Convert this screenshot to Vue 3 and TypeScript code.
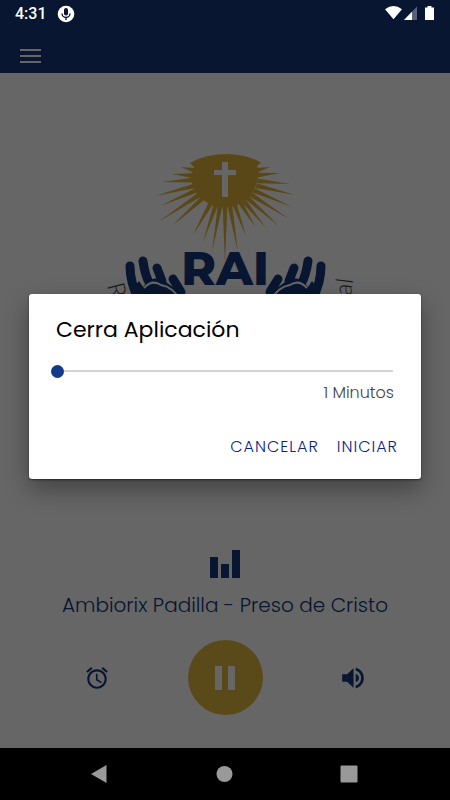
<script setup lang="ts">
import { ref } from 'vue'

const minutes = ref(1)
const open = ref(true)
const track = 'Ambiorix Padilla - Preso de Cristo'

// Tips of the sun rays in the logo; each ray starts on the edge of the disc
const tips: [number, number][] = [
  [181, 167], [172, 174], [162, 182], [155, 196], [160, 206], [158, 222],
  [172, 226], [193, 235], [203, 242], [212, 252], [225, 264], [238, 252],
  [246, 236], [256, 228], [266, 228], [279, 226], [289, 219], [292, 207],
  [295, 195], [290, 184], [280, 173], [270, 167],
]

function rayPoints([x, y]: [number, number]): string {
  const dx = x - 225
  const dy = y - 178
  const reach = 0.93 / Math.hypot(dx / 35, dy / 28)
  const bx = 225 + dx * reach
  const by = 178 + dy * reach
  const length = Math.hypot(dx, dy)
  const nx = (-dy / length) * 2.4
  const ny = (dx / length) * 2.4
  return `${bx + nx},${by + ny} ${x},${y} ${bx - nx},${by - ny}`
}
</script>

<template>
  <main class="phone">
    <header class="top">
      <div class="status">
        <div class="status-side">
          <time>4:31</time>
          <svg class="mic" viewBox="0 0 18 18" aria-hidden="true">
            <circle cx="9" cy="9" r="8.3" fill="#fff" />
            <rect x="7" y="3" width="4" height="7.5" rx="2" fill="#081630" />
            <path d="M5 8.5a4 4 0 0 0 8 0M9 12.5v2.5" fill="none" stroke="#081630" stroke-width="1.4" />
          </svg>
        </div>
        <svg class="signals" viewBox="0 0 50 16" aria-hidden="true">
          <path d="M0 3.300Q8.500 -3.300 17 3.300L8.500 13.300Z" fill="#fff" />
          <path d="M32 .5V14H19Z" fill="#56617a" />
          <path d="M27 5.700V14H19Z" fill="#fff" />
          <path d="M42.500 0h4v1.500H49V14h-9V1.500h2.500Z" fill="#fff" />
        </svg>
      </div>
      <button class="menu" type="button" aria-label="Menu">
        <span></span><span></span><span></span>
      </button>
    </header>

    <section class="content">
      <svg class="logo" viewBox="95 73 260 250" role="img" aria-label="RAI">
        <g fill="#e0b23c">
          <path d="M190 163Q205 154 228 154Q250 155 261 163L257 166Q260 172 257 182Q254 193 247 199Q237 207 225 207Q211 207 202 199Q194 192 192 183Q191 174 194 167Z" />
          <polygon v-for="(tip, i) in tips" :key="i" :points="rayPoints(tip)" />
        </g>
        <path d="M222 162h6v8h8v5h-8v22h-6v-22h-8v-5h8Z" fill="#fff" />
        <text class="brand" x="225" y="285" text-anchor="middle">RAI</text>
        <g class="hands">
          <path class="fingers" d="M130 266Q130 283 139 300M143 261Q145 276 150 284M157 268L162 281M173 279L181 292" />
          <path class="palm" d="M132 290L140 302H184L177 290Q173 287 170 285L162 279Q151 276 143 287L139 281Z" />
          <path class="crease" d="M144 288Q152 279 161 285Q173 287 180 300" />
        </g>
        <g class="hands" transform="matrix(-1 0 0 1 451 0)">
          <path class="fingers" d="M130 266Q130 283 139 300M143 261Q145 276 150 284M157 268L162 281M173 279L181 292" />
          <path class="palm" d="M132 290L140 302H184L177 290Q173 287 170 285L162 279Q151 276 143 287L139 281Z" />
          <path class="crease" d="M144 288Q152 279 161 285Q173 287 180 300" />
        </g>
        <text class="ring" transform="translate(107 285) rotate(76)">R</text>
        <text class="ring" transform="translate(351 296) rotate(-83)">al</text>
      </svg>

      <div class="player">
        <svg class="bars" viewBox="0 0 30 28" aria-hidden="true">
          <path d="M0 7h8v21H0ZM11 14h8v14h-8ZM22 0h8v28h-8Z" fill="#14377b" />
        </svg>
        <h1>{{ track }}</h1>
        <div class="controls">
          <button class="icon" type="button" aria-label="Temporizador" @click="open = true">
            <svg viewBox="0 0 24 24"><path d="M22 5.720l-4.600-3.860-1.290 1.530 4.600 3.860L22 5.720zM7.880 3.390L6.600 1.860 2 5.710l1.290 1.530 4.590-3.850zM12.500 8H11v6l4.750 2.850.75-1.230-4-2.370V8zM12 4c-4.970 0-9 4.030-9 9s4.020 9 9 9c4.970 0 9-4.030 9-9s-4.030-9-9-9zm0 16c-3.870 0-7-3.130-7-7s3.130-7 7-7 7 3.130 7 7-3.130 7-7 7z" /></svg>
          </button>
          <button class="pause" type="button" aria-label="Pausa">
            <svg viewBox="0 0 24 24"><path d="M2 0h7v24H2ZM15 0h7v24h-7Z" /></svg>
          </button>
          <button class="icon" type="button" aria-label="Volumen">
            <svg viewBox="0 0 24 24"><path d="M2 8.500v7h4.500l6 5.500V3L6.500 8.500H2zM17.500 12c0-1.770-1.020-3.290-3-4.030v8.050c1.980-.73 3-2.250 3-4.020zM14.500 2.500v2.600c2.890.86 5 3.540 5 6.900s-2.110 6.040-5 6.900v2.600c4.210-.91 7.500-4.690 7.500-9.500s-3.290-8.590-7.500-9.500z" /></svg>
          </button>
        </div>
      </div>
    </section>

    <nav class="system">
      <button type="button" aria-label="Atrás"><svg viewBox="0 0 18 18"><path d="M1 9L16.500 0v18Z" /></svg></button>
      <button type="button" aria-label="Inicio"><svg viewBox="0 0 18 18"><circle cx="9.500" cy="9" r="8" /></svg></button>
      <button type="button" aria-label="Recientes"><svg viewBox="0 0 18 18"><rect x=".5" y=".5" width="17" height="17" rx="1" /></svg></button>
    </nav>

    <div v-if="open" class="scrim">
      <div class="dialog" role="dialog" aria-modal="true" aria-labelledby="dialog-title">
        <h2 id="dialog-title">Cerra Aplicación</h2>
        <input id="minutes" v-model.number="minutes" type="range" min="1" max="120" />
        <label for="minutes">{{ minutes }} Minutos</label>
        <div class="actions">
          <button type="button" @click="open = false">CANCELAR</button>
          <button type="button" @click="open = false">INICIAR</button>
        </div>
      </div>
    </div>
  </main>
</template>

<style>
body {
  background: #000;
}
</style>

<style scoped>
* {
  box-sizing: border-box;
}
.phone {
  position: relative;
  display: flex;
  flex-direction: column;
  min-height: 100vh;
  font-family: Poppins, Inter, sans-serif;
  background: #fff;
}
button {
  padding: 0;
  border: 0;
  background: none;
  font: inherit;
  cursor: pointer;
}
svg {
  display: block;
}
.top {
  background: #14377b;
}
.status {
  position: relative;
  z-index: 2;
  display: flex;
  align-items: center;
  justify-content: space-between;
  height: 27px;
  padding: 0 15px;
  color: #fff;
}
.status-side {
  display: flex;
  align-items: center;
  gap: 10px;
}
time {
  font: 500 16px/28px Roboto, sans-serif;
}
.mic {
  width: 18px;
  height: 18px;
}
.signals {
  width: 50px;
  height: 16px;
}
.menu {
  display: flex;
  flex-direction: column;
  gap: 4px;
  margin: 22px 20px 10px;
  width: 21px;
}
.menu span {
  height: 2px;
  background: #fff;
}
.content {
  flex: 1;
  display: flex;
  flex-direction: column;
  justify-content: space-between;
  align-items: center;
  padding-bottom: 33px;
}
.logo {
  width: 260px;
  height: 250px;
}
.brand {
  font: 800 47px Montserrat, Inter, sans-serif;
  fill: #14377b;
}
.ring {
  font: 300 24px Lato, sans-serif;
  fill: #444;
}
.fingers {
  fill: none;
  stroke: #14377b;
  stroke-width: 9;
  stroke-linecap: round;
}
.palm {
  fill: #14377b;
}
.crease {
  fill: none;
  stroke: #fff;
  stroke-width: 2;
}
.player {
  width: 100%;
  display: flex;
  flex-direction: column;
  align-items: center;
}
.bars {
  width: 30px;
  height: 28px;
}
h1 {
  margin: 12px 0 20px;
  font-size: 20px;
  line-height: 30px;
  font-weight: 300;
  color: #14377b;
}
.controls {
  width: 100%;
  display: flex;
  align-items: center;
  justify-content: space-between;
  padding: 0 84px;
}
.icon svg {
  width: 26px;
  height: 26px;
  fill: #14377b;
}
.pause {
  display: grid;
  place-items: center;
  width: 75px;
  height: 75px;
  border-radius: 50%;
  background: #e0b940;
}
.pause svg {
  width: 24px;
  height: 24px;
  fill: #fff;
}
.system {
  position: relative;
  z-index: 2;
  display: flex;
  justify-content: space-between;
  align-items: center;
  height: 52px;
  padding: 0 92px 0 90px;
  background: #000;
}
.system svg {
  width: 18px;
  height: 18px;
  fill: #999;
}
.scrim {
  position: absolute;
  inset: 0;
  display: flex;
  align-items: center;
  padding: 0 29px 27px;
  background: rgba(0, 0, 0, 0.6);
}
.dialog {
  flex: 1;
  padding: 20px 23px 19px 27px;
  border-radius: 3px;
  background: #fff;
  box-shadow: 0 10px 24px rgba(0, 0, 0, 0.35), 0 1px 2px rgba(0, 0, 0, 0.5);
}
h2 {
  margin: 0 0 18px;
  font-size: 22px;
  line-height: 32px;
  font-weight: 400;
  color: #000;
}
input {
  display: block;
  appearance: none;
  width: calc(100% + 2px);
  height: 14px;
  margin: 0 0 0 -5px;
  background: linear-gradient(#d4d4d4, #d4d4d4) center / calc(100% - 4px) 2px no-repeat;
}
input::-webkit-slider-thumb {
  appearance: none;
  width: 13px;
  height: 13px;
  border-radius: 50%;
  background: #123a88;
}
label {
  display: block;
  margin: 3px 4px 0 0;
  text-align: right;
  font-size: 16px;
  line-height: 24px;
  font-weight: 300;
  color: #444;
}
.actions {
  display: flex;
  justify-content: flex-end;
  gap: 18px;
  margin-top: 29px;
}
.actions button {
  font-size: 16px;
  line-height: 26px;
  font-weight: 300;
  letter-spacing: 1px;
  color: #0c2484;
}
</style>
